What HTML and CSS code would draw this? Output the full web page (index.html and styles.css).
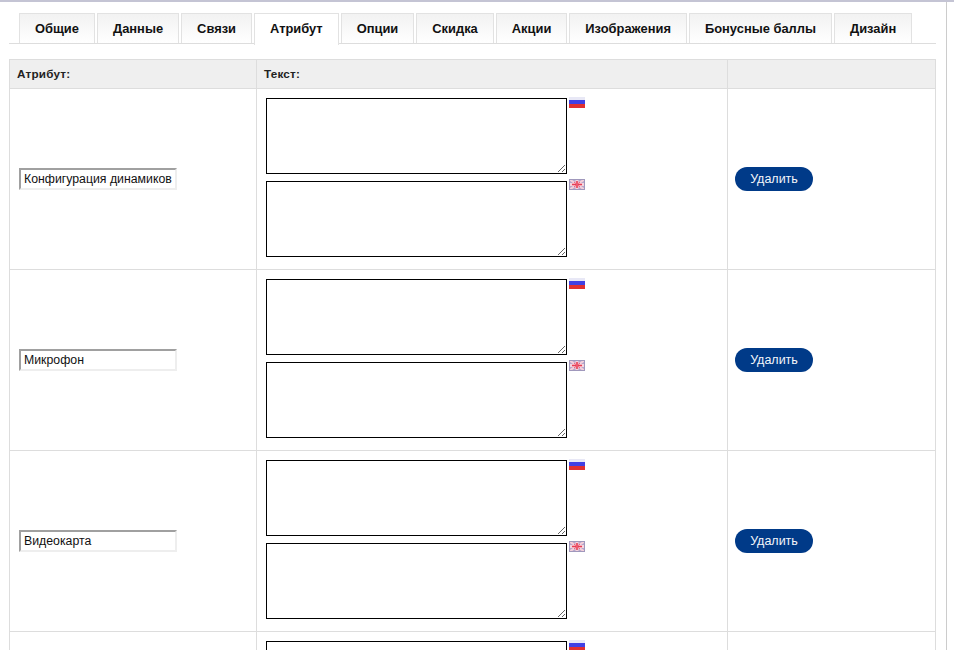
FILE: index.html
```html
<!DOCTYPE html>
<html lang="ru">
<head>
  <meta charset="UTF-8" />
  <title>Атрибут</title>
  <link rel="stylesheet" href="styles.css">
</head>
<body>

  <svg class="flag-defs" width="0" height="0">
    <symbol id="flag-ru" viewBox="0 0 16 11">
      <rect width="16" height="3" fill="#e8e8f6"/>
      <rect y="3" width="16" height="4" fill="#4040e4"/>
      <rect y="7" width="16" height="4" fill="#e03030"/>
    </symbol>
    <symbol id="flag-en" viewBox="0 0 16 11">
      <rect width="16" height="11" fill="#b4a8cc"/>
      <path d="M0 0L16 11M16 0L0 11" stroke="#f4d0da" stroke-width="2"/>
      <path d="M8 0V11M0 5.5H16" stroke="#f6d4dc" stroke-width="3"/>
      <path d="M8 2V9M3 5.5H13" stroke="#e83c54" stroke-width="1.6"/>
      <path d="M5 3L11 8M11 3L5 8" stroke="#ee6078"/>
      <rect x=".5" y=".5" width="15" height="10" fill="none" stroke="#a098bc"/>
    </symbol>
  </svg>

  <div class="page">
    <!-- Вкладки -->
    <div class="tabs">
      <a href="#">Общие</a>
      <a href="#">Данные</a>
      <a href="#">Связи</a>
      <a href="#" class="active">Атрибут</a>
      <a href="#">Опции</a>
      <a href="#">Скидка</a>
      <a href="#">Акции</a>
      <a href="#">Изображения</a>
      <a href="#">Бонусные баллы</a>
      <a href="#">Дизайн</a>
    </div>

    <!-- Атрибуты -->
    <table class="list">
      <thead>
        <tr>
          <td class="col-name">Атрибут:</td>
          <td class="col-text">Текст:</td>
          <td></td>
        </tr>
      </thead>
      <tbody>
        <tr>
          <td><input type="text" class="name-input" value="Конфигурация динамиков"></td>
          <td class="text-cell">
            <div class="lang-row"><textarea></textarea><svg class="flag"><use href="#flag-ru"/></svg></div>
            <div class="lang-row"><textarea></textarea><svg class="flag"><use href="#flag-en"/></svg></div>
          </td>
          <td><a href="#" class="button">Удалить</a></td>
        </tr>
        <tr>
          <td><input type="text" class="name-input" value="Микрофон"></td>
          <td class="text-cell">
            <div class="lang-row"><textarea></textarea><svg class="flag"><use href="#flag-ru"/></svg></div>
            <div class="lang-row"><textarea></textarea><svg class="flag"><use href="#flag-en"/></svg></div>
          </td>
          <td><a href="#" class="button">Удалить</a></td>
        </tr>
        <tr>
          <td><input type="text" class="name-input" value="Видеокарта"></td>
          <td class="text-cell">
            <div class="lang-row"><textarea></textarea><svg class="flag"><use href="#flag-ru"/></svg></div>
            <div class="lang-row"><textarea></textarea><svg class="flag"><use href="#flag-en"/></svg></div>
          </td>
          <td><a href="#" class="button">Удалить</a></td>
        </tr>
        <tr>
          <td></td>
          <td class="text-cell">
            <div class="lang-row"><textarea></textarea><svg class="flag"><use href="#flag-ru"/></svg></div>
          </td>
          <td></td>
        </tr>
      </tbody>
    </table>
  </div>

</body>
</html>
```

FILE: styles.css
```css
html, body {
  height: 650px;
  overflow: hidden;
}

body {
  margin: 0;
  font-family: "Liberation Sans", Arial, sans-serif;
  font-size: 12px;
  color: #000;
  background-color: #fff;
  border-top: 2px solid #c4c4d4;
}

.flag-defs {
  position: absolute;
}

.page {
  box-sizing: border-box;
  width: 947px;
  height: 648px;
  padding: 11px 10px 0 9px;
  border-right: 1px solid #ccc;
  overflow: hidden;
}

.tabs {
  display: flex;
  gap: 2px;
  height: 30px;
  padding-left: 10px;
  border-bottom: 1px solid #ddd;
  margin-bottom: 15px;
}

.tabs a {
  padding: 7px 15px 0;
  border: 1px solid #e2e2e2;
  border-bottom: none;
  background: linear-gradient(#f2f2f2, #fff);
  color: #111;
  font-size: 12.9px;
  font-weight: bold;
  text-decoration: none;
}

.tabs a.active {
  background: #fff;
  height: 24px;
}

.list {
  width: 927px;
  border-collapse: collapse;
  table-layout: fixed;
}

.list td {
  border: 1px solid #ddd;
  padding: 7px 7px 8px;
}

.list thead td {
  height: 13px;
  background-color: #efefef;
  color: #222;
  font-weight: bold;
  font-size: 11.7px;
  line-height: 13px;
  letter-spacing: .2px;
}

.col-name {
  width: 232px;
}

.col-text {
  width: 456px;
}

.list tbody td {
  height: 165px;
  vertical-align: middle;
}

.list tbody td.text-cell {
  padding-top: 9px;
  padding-bottom: 6px;
  vertical-align: top;
}

.name-input {
  display: block;
  box-sizing: border-box;
  width: 158px;
  height: 22px;
  margin-left: 2px;
  padding: 1px 3px;
  border: 2px solid #eee;
  border-top-color: #a0a0a0;
  border-left-color: #a0a0a0;
  font-family: "Liberation Sans", Arial, sans-serif;
  font-size: 12.3px;
  color: #111;
}

.lang-row {
  display: flex;
  align-items: flex-start;
  gap: 2px;
  margin-left: 2px;
}

.lang-row + .lang-row {
  margin-top: 7px;
}

.lang-row textarea {
  box-sizing: border-box;
  width: 301px;
  height: 76px;
  margin: 0;
  padding: 2px;
  border: 1px solid #000;
}

.flag {
  width: 16px;
  height: 11px;
  margin-top: -1px;
}

.lang-row + .lang-row .flag {
  margin-top: -2px;
}

.button {
  display: block;
  width: 78px;
  box-sizing: border-box;
  padding: 5px 0;
  border-radius: 12px;
  background-color: #003a88;
  color: #f4f6fa;
  font-size: 12.5px;
  line-height: 14px;
  text-align: center;
  text-decoration: none;
}
```
